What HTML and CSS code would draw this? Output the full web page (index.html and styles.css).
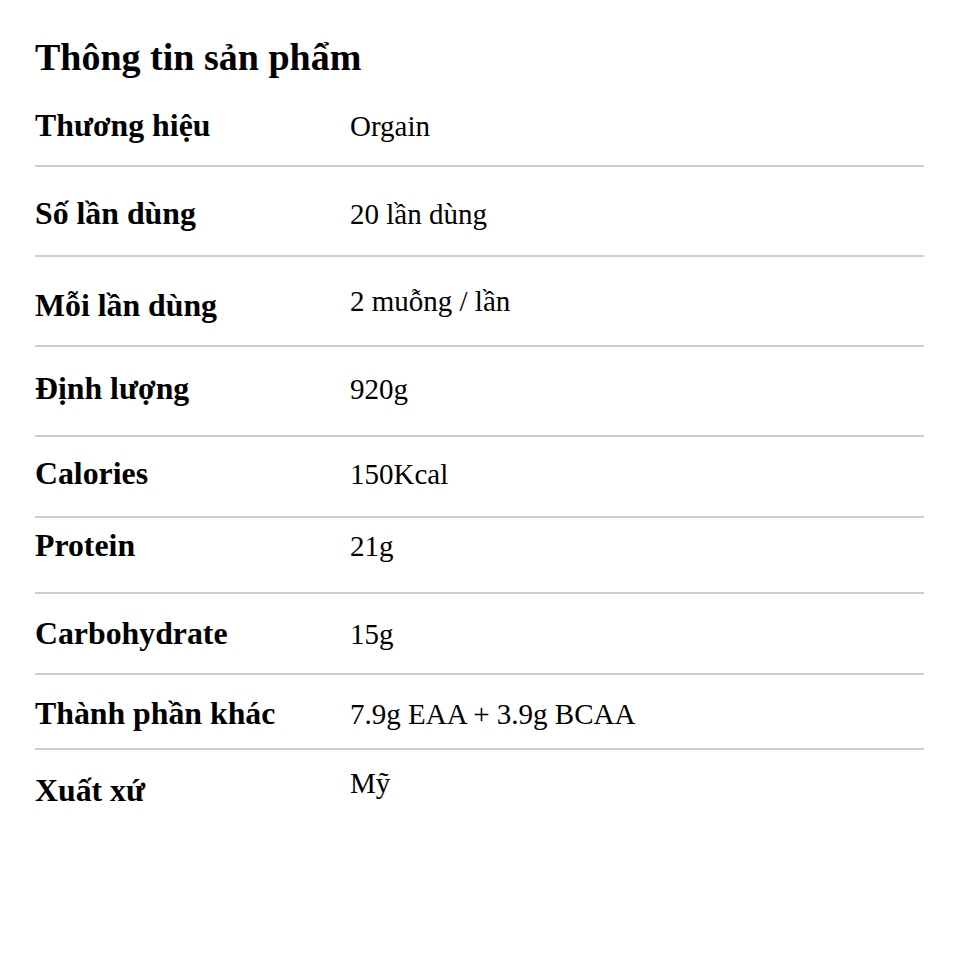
FILE: index.html
```html
<!DOCTYPE html>
<html lang="vi">
<head>
<meta charset="utf-8">
<title>Thông tin sản phẩm</title>
<link rel="stylesheet" href="styles.css">
</head>
<body>
<div class="sheet">
  <h1 class="title">Thông tin sản phẩm</h1>
  <div class="specs">
    <div class="row row-1"><div class="label">Thương hiệu</div><div class="value">Orgain</div></div>
    <div class="row row-2"><div class="label">Số lần dùng</div><div class="value">20 lần dùng</div></div>
    <div class="row row-3"><div class="label">Mỗi lần dùng</div><div class="value value-up5">2 muỗng / lần</div></div>
    <div class="row row-4"><div class="label">Định lượng</div><div class="value">920g</div></div>
    <div class="row row-5"><div class="label">Calories</div><div class="value">150Kcal</div></div>
    <div class="row row-6"><div class="label">Protein</div><div class="value">21g</div></div>
    <div class="row row-7"><div class="label">Carbohydrate</div><div class="value">15g</div></div>
    <div class="row row-8"><div class="label">Thành phần khác</div><div class="value">7.9g EAA + 3.9g BCAA</div></div>
    <div class="row row-9"><div class="label">Xuất xứ</div><div class="value value-up8">Mỹ</div></div>
  </div>
</div>
</body>
</html>
```

FILE: styles.css
```css
html, body {
  margin: 0;
  padding: 0;
  background: #ffffff;
}

body {
  font-family: "Liberation Serif", "Times New Roman", serif;
  color: #000;
}

.sheet {
  padding: 35px 30px 0 35px;
}

.title {
  margin: 0;
  font-size: 38px;
  line-height: 44px;
  font-weight: 700;
  height: 44px;
}

.specs {
  display: flex;
  flex-direction: column;
}

.row {
  display: grid;
  grid-template-columns: 315px 1fr;
  align-items: start;
  line-height: 32px;
  border-bottom: 2px solid #cdcdcd;
}

.row-9 { border-bottom: none; }

.label {
  font-size: 31.8px;
  font-weight: 700;
}

.value {
  font-size: 29px;
  font-weight: 400;
}

.value-up5 { margin-top: -5px; }
.value-up8 { margin-top: -8px; }

.row-1 { padding: 31px 0 23px; }
.row-2 { padding: 31px 0 25px; }
.row-3 { padding: 33px 0 23px; }
.row-4 { padding: 26px 0 30px; }
.row-5 { padding: 21px 0 26px; }
.row-6 { padding: 12px 0 30px; }
.row-7 { padding: 24px 0 23px; }
.row-8 { padding: 23px 0 18px; }
.row-9 { padding: 25px 0 0; }
```
